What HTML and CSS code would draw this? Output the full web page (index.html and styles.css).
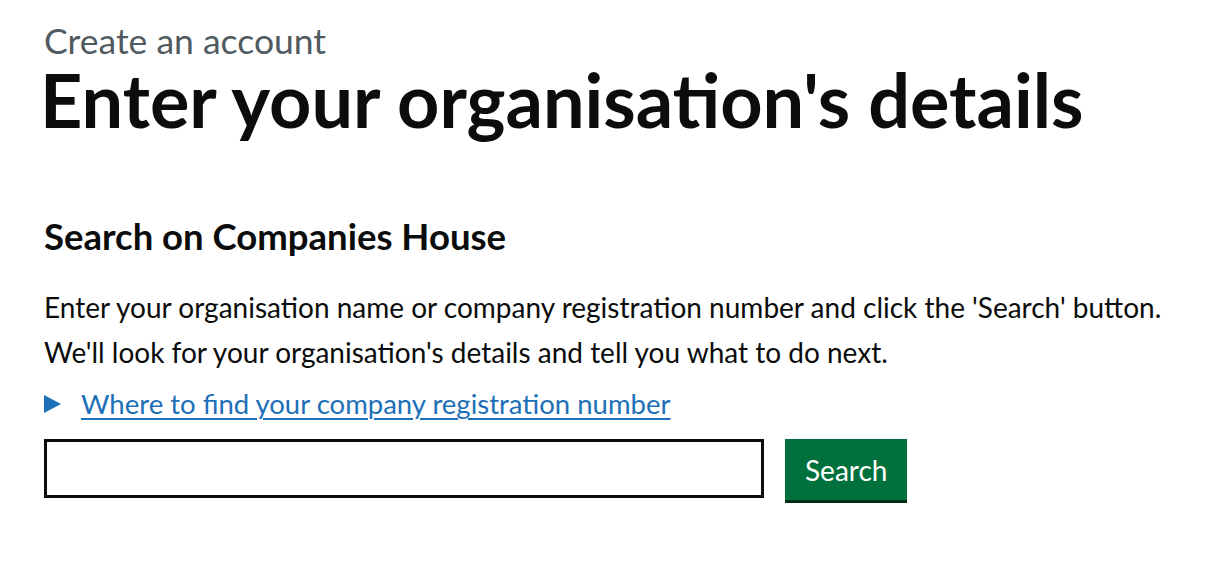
FILE: index.html
```html
<!DOCTYPE html>
<html lang="en">
<head>
<meta charset="utf-8">
<title>Enter your organisation's details</title>
<link rel="stylesheet" href="styles.css">
</head>
<body>
<main class="page">
  <span class="caption">Create an account</span>
  <h1 class="title">Enter your organisation's details</h1>
  <h2 class="section-title">Search on Companies House</h2>
  <p class="body-text">Enter your organisation name or company registration number and click the 'Search' button. We'll look for your organisation's details and tell you what to do next.</p>
  <details class="details">
    <summary class="details-summary"><span class="details-text">Where to find your company registration number</span></summary>
  </details>
  <div class="search-row">
    <input class="search-input" type="text" aria-label="Organisation name or company registration number">
    <button class="search-button" type="button">Search</button>
  </div>
</main>
</body>
</html>
```
FILE: styles.css
```css
html, body {
  margin: 0;
  padding: 0;
  background: #ffffff;
}
body {
  font-family: "Lato", "Liberation Sans", Arial, sans-serif;
  color: #0b0c0c;
}
.page {
  display: flex;
  flex-direction: column;
  align-items: flex-start;
  padding: 23px 0 0 44px;
  max-width: 1140px;
}
.caption {
  display: block;
  font-size: 35.5px;
  line-height: 36px;
  font-weight: 400;
  color: #505a5f;
}
.title {
  margin: 4px 0 0 -4px;
  font-size: 73.8px;
  line-height: 74px;
  font-weight: 700;
  color: #0b0c0c;
}
.section-title {
  margin: 77px 0 0;
  font-size: 36.5px;
  line-height: 45px;
  font-weight: 700;
}
.body-text {
  margin: 26px 0 0;
  font-size: 28px;
  line-height: 45px;
  font-weight: 400;
}
.details {
  margin-top: 6px;
}
.details-summary {
  display: flex;
  align-items: center;
  gap: 20px;
  list-style: none;
  cursor: pointer;
  font-size: 27.5px;
  line-height: 45px;
  color: #1d70b8;
}
.details-summary::-webkit-details-marker {
  display: none;
}
.details-summary::before {
  content: "";
  display: block;
  width: 0;
  height: 0;
  border-style: solid;
  border-width: 9px 0 9px 17px;
  border-color: transparent transparent transparent #1d70b8;
}
.details-text {
  text-decoration: underline;
  text-decoration-thickness: 2px;
  text-underline-offset: 4px;
}
.search-row {
  display: flex;
  align-items: flex-start;
  gap: 21px;
  margin-top: 13px;
}
.search-input {
  box-sizing: border-box;
  width: 720px;
  height: 59px;
  margin: 0;
  border: 3px solid #0b0c0c;
  border-radius: 0;
  padding: 0 8px;
  font-family: inherit;
  font-size: 28px;
  background: #ffffff;
}
.search-button {
  box-sizing: border-box;
  height: 64px;
  margin: 0;
  padding: 0 20px;
  border: 0;
  border-bottom: 3px solid #002d18;
  border-radius: 0;
  background: #00703c;
  color: #ffffff;
  font-family: inherit;
  font-size: 28px;
  line-height: 58px;
  font-weight: 400;
  cursor: pointer;
}
```
